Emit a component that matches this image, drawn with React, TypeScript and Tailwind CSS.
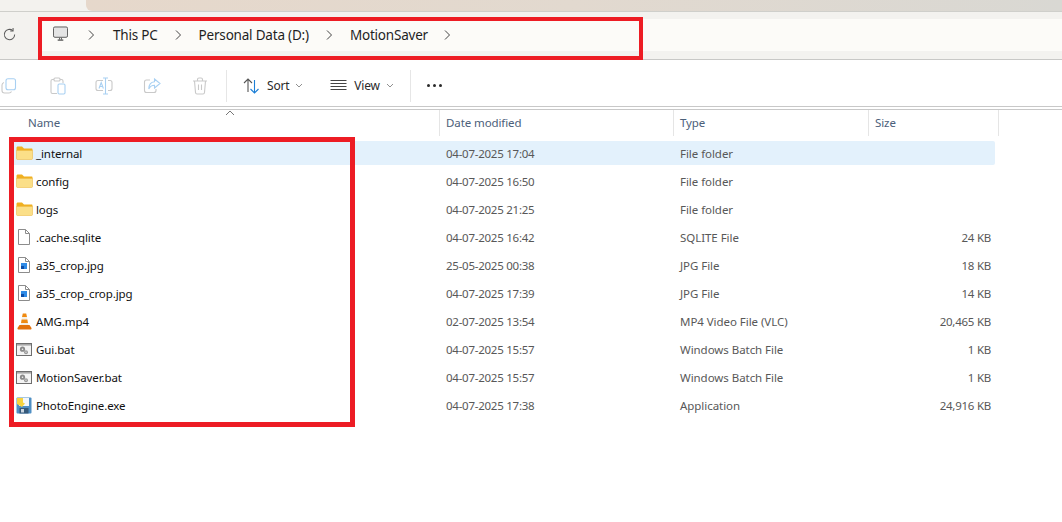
import React from "react";

const font = "font-['Noto_Sans','Open_Sans',sans-serif]";

function Chevron() {
  return (
    <svg width="8" height="12" viewBox="0 0 8 12" fill="none" stroke="#444" strokeWidth="1">
      <path d="M2 1.5 6.5 6 2 10.5" />
    </svg>
  );
}

function Folder() {
  return (
    <svg width="17" height="14" viewBox="0 0 17 14">
      <path d="M0.5 2C0.5 1 1 .5 2 .5H6L8 2.5H15.5C16.3 2.5 16.5 3 16.5 3.5V5H.5Z" fill="#f0b020" />
      <path d="M.5 4.5H16.5V12.5C16.5 13.2 16 13.5 15.5 13.5H1.5C1 13.5.5 13.2.5 12.5Z" fill="#fbdf88" stroke="#eebc4a" strokeWidth=".6" />
    </svg>
  );
}

function Page({ blue }: { blue?: boolean }) {
  return (
    <svg width="13" height="16" viewBox="0 0 13 16" fill="none" className="ml-[1px]">
      <path d="M1.5.5H8.5L12.5 4.5V15.5H1.5Z" fill="#fff" stroke="#8c8c8c" />
      <path d="M8.5.5V4.5H12.5" stroke="#8c8c8c" />
      {blue && <rect x="4" y="6" width="6" height="6" fill="#2f8be6" />}
      {blue && <rect x="4" y="9" width="3" height="3" fill="#0b4ea8" />}
    </svg>
  );
}

function Cone() {
  return (
    <svg width="15" height="17" viewBox="0 0 15 17" className="ml-[1px]">
      <path d="M5.8 .5H9.2L10 4H5Z" fill="#f08a10" />
      <path d="M5 4H10L10.4 6.5H4.6Z" fill="#f5f0e6" />
      <path d="M4.6 6.5H10.4L11 10H4Z" fill="#ee8a12" />
      <path d="M4 10H11L11.5 12H3.5Z" fill="#f4ece0" />
      <path d="M2.5 12H12.5L14.5 15C14.7 16 14 16.5 13.5 16.5H1.5C1 16.5.3 16 .5 15Z" fill="#e2710a" />
    </svg>
  );
}

function Bat() {
  return (
    <svg width="16" height="13" viewBox="0 0 16 13">
      <rect x=".5" y=".5" width="15" height="12" fill="#f4f4f4" stroke="#6e6e6e" />
      <rect x="1" y="1" width="14" height="1.6" fill="#a8a8a8" />
      <circle cx="6.5" cy="6.2" r="2.6" fill="#8a8a8a" />
      <circle cx="10" cy="9.2" r="2" fill="#9a9a9a" />
      <circle cx="6.5" cy="6.2" r=".8" fill="#f4f4f4" />
      <circle cx="10" cy="9.2" r=".6" fill="#f4f4f4" />
    </svg>
  );
}

function Exe() {
  return (
    <svg width="16" height="17" viewBox="0 0 16 17">
      <rect x=".5" y=".5" width="15" height="16" rx="1" fill="#4f8fc4" />
      <rect x="3" y="1" width="10" height="8" fill="#f3f6fa" />
      <path d="M1 1H7V5.5L9 6.5 6 10 1 7Z" fill="#f7d33f" />
      <rect x="3.5" y="11" width="9" height="5.5" fill="#36597a" />
      <rect x="5" y="12" width="3" height="3.5" fill="#c8d4e0" />
    </svg>
  );
}

const rows: [React.ReactNode, string, string, string, string][] = [
  [<Folder />, "_internal", "04-07-2025 17:04", "File folder", ""],
  [<Folder />, "config", "04-07-2025 16:50", "File folder", ""],
  [<Folder />, "logs", "04-07-2025 21:25", "File folder", ""],
  [<Page />, ".cache.sqlite", "04-07-2025 16:42", "SQLITE File", "24 KB"],
  [<Page blue />, "a35_crop.jpg", "25-05-2025 00:38", "JPG File", "18 KB"],
  [<Page blue />, "a35_crop_crop.jpg", "04-07-2025 17:39", "JPG File", "14 KB"],
  [<Cone />, "AMG.mp4", "02-07-2025 13:54", "MP4 Video File (VLC)", "20,465 KB"],
  [<Bat />, "Gui.bat", "04-07-2025 15:57", "Windows Batch File", "1 KB"],
  [<Bat />, "MotionSaver.bat", "04-07-2025 15:57", "Windows Batch File", "1 KB"],
  [<Exe />, "PhotoEngine.exe", "04-07-2025 17:38", "Application", "24,916 KB"],
];

function Crumb({ label }: { label: string }) {
  return <span className="text-[13.5px] text-[#1f1f1f] tracking-[-0.2px]">{label}</span>;
}

export default function App() {
  return (
    <div className={`relative w-[1062px] h-[522px] overflow-hidden bg-white ${font}`}>
      {/* title band */}
      <div className="h-[11px] bg-[#f3f2ee] pl-[86px] border-b border-[#cfcfcb] box-content">
        <div className="h-[11px] rounded-bl-[6px] bg-gradient-to-r from-[#e6d8cb] via-[#e2d9cf] to-[#d9d8d3]" />
      </div>

      {/* address row */}
      <div className="h-[48px] bg-[#f3f2ef] border-b border-[#c8c8c6] pt-[7px] flex">
        <div className="w-[38px] flex items-start pt-[8px] pl-[2px]">
          <svg width="15" height="15" viewBox="0 0 16 16" fill="none" stroke="#5a5a5a" strokeWidth="1.1">
            <path d="M13.5 8A5.5 5.5 0 1 1 11.5 3.8" />
            <path d="M11.8 1V4.2H8.8" />
          </svg>
        </div>
        <div className="flex-1 h-[32px] bg-[#fcfbf8] flex items-center pl-[15px]">
          <svg width="15" height="16" viewBox="0 0 16 16" fill="none" className="mb-[2px]">
            <rect x=".5" y=".5" width="15" height="11" rx="1.5" fill="#e4e4e4" stroke="#555" />
            <path d="M5 14.5H11" stroke="#555" strokeWidth="1.4" />
            <path d="M7 12V14M9 12V14" stroke="#555" />
          </svg>
          <span className="ml-[19px] mr-[18px]"><Chevron /></span>
          <Crumb label="This PC" />
          <span className="ml-[16px] mr-[17px]"><Chevron /></span>
          <Crumb label="Personal Data (D:)" />
          <span className="ml-[16px] mr-[17px]"><Chevron /></span>
          <Crumb label="MotionSaver" />
          <span className="ml-[15px]"><Chevron /></span>
        </div>
      </div>

      {/* command bar */}
      <div className="h-[46px] bg-white flex items-center pt-[5px] text-[12px] tracking-[-0.2px] text-[#2a2a2a]">
        <div className="flex items-center gap-[28px] pl-[1px]">
          <svg width="16" height="16" viewBox="0 0 16 16" fill="none">
            <rect x="5" y=".7" width="9.5" height="11" rx="2" stroke="#a8d0f2" strokeWidth="1.1" />
            <path d="M3 4.5C1.6 5 1 5.7 1 7V12.5C1 14 2 15 3.5 15H8C9.3 15 10 14.5 10.5 13.5" stroke="#c9c9c9" strokeWidth="1.1" />
          </svg>
          <svg width="18" height="18" viewBox="0 0 18 18" fill="none" className="ml-[4px]">
            <path d="M5 2.5H3.5C2.5 2.5 2 3 2 4V15C2 16 2.5 16.5 3.5 16.5H8" stroke="#c9c9c9" strokeWidth="1.1" />
            <path d="M11 2.5H12.5C13.5 2.5 14 3 14 4V6" stroke="#c9c9c9" strokeWidth="1.1" />
            <rect x="5" y="1" width="6" height="3" rx="1" stroke="#c9c9c9" strokeWidth="1.1" />
            <rect x="9" y="7" width="7" height="10" rx="1.2" stroke="#a8d0f2" strokeWidth="1.1" />
          </svg>
          <svg width="18" height="18" viewBox="0 0 18 18" fill="none">
            <path d="M8 3.5H3C1.8 3.5 1 4.2 1 5.5V11.5C1 12.8 1.8 13.5 3 13.5H8" stroke="#c9c9c9" strokeWidth="1.1" />
            <path d="M13 3.5H15C16.2 3.5 17 4.2 17 5.5V11.5C17 12.8 16.2 13.5 15 13.5H13" stroke="#c9c9c9" strokeWidth="1.1" />
            <path d="M8 1H13M10.5 1V17M8 17H13" stroke="#a8d0f2" strokeWidth="1.1" />
            <path d="M4 11.5 6.2 5.5 8.4 11.5M4.8 9.5H7.6" stroke="#a8d0f2" strokeWidth="1.1" />
          </svg>
          <svg width="18" height="18" viewBox="0 0 18 18" fill="none" className="ml-[2px]">
            <path d="M7 3H3.5C2 3 1.5 4 1.5 5V13.5C1.5 15 2.5 15.5 3.5 15.5H11C12.5 15.5 13 14.5 13 13.5V12" stroke="#c9c9c9" strokeWidth="1.1" />
            <path d="M11.5 2 17 6.5 11.5 11V8.3C8.5 8.3 7 9.5 5.8 12 5.8 7.5 8 5 11.5 4.7Z" stroke="#a8d0f2" strokeWidth="1.1" />
          </svg>
          <svg width="16" height="18" viewBox="0 0 16 18" fill="none" className="ml-[3px]">
            <path d="M1 4H15M5.5 4V2.5C5.5 1.5 6 1 7 1H9C10 1 10.5 1.5 10.5 2.5V4" stroke="#c9c9c9" strokeWidth="1.1" />
            <path d="M2.5 4 3.5 15.5C3.6 16.5 4.2 17 5 17H11C11.8 17 12.4 16.5 12.5 15.5L13.5 4" stroke="#c9c9c9" strokeWidth="1.1" />
            <path d="M6.5 7.5V13M9.5 7.5V13" stroke="#c9c9c9" strokeWidth="1.1" />
          </svg>
        </div>
        <div className="w-px h-[32px] bg-[#e6e6e6] ml-[18px]" />
        <div className="flex items-center ml-[16px]">
          <svg width="17" height="16" viewBox="0 0 17 16" fill="none">
            <path d="M1 5 5 1 9 5M5 1V14" stroke="#555" strokeWidth="1.1" />
            <path d="M7.5 11 11.5 15 15.5 11M11.5 15V2" stroke="#1c7fd6" strokeWidth="1.1" />
          </svg>
          <span className="ml-[7px]">Sort</span>
          <svg width="8" height="5" viewBox="0 0 8 5" fill="none" stroke="#909090" className="ml-[6px]"><path d="M1 1 4 4 7 1" /></svg>
        </div>
        <div className="flex items-center ml-[27px]">
          <svg width="17" height="13" viewBox="0 0 17 13" fill="none" stroke="#444">
            <path d="M.5 1.5H16.5M.5 4.5H16.5M.5 7.5H16.5M.5 10.5H16.5" />
          </svg>
          <span className="ml-[7px]">View</span>
          <svg width="8" height="5" viewBox="0 0 8 5" fill="none" stroke="#909090" className="ml-[6px]"><path d="M1 1 4 4 7 1" /></svg>
        </div>
        <div className="w-px h-[32px] bg-[#e6e6e6] ml-[16px]" />
        <div className="flex items-center gap-[3px] ml-[16px]">
          <span className="w-[3px] h-[3px] rounded-full bg-[#2a2a2a]" />
          <span className="w-[3px] h-[3px] rounded-full bg-[#2a2a2a]" />
          <span className="w-[3px] h-[3px] rounded-full bg-[#2a2a2a]" />
        </div>
      </div>

      {/* column header */}
      <div className="h-[4px] border-t border-b border-[#c8c8c8]" />
      <div className="grid grid-cols-[440px_234px_195px_130px] h-[26px] text-[11.5px] tracking-[-0.1px] text-[#4c607a] relative">
        <div className="pl-[28px] pt-[4px] border-r border-[#e5e5e5]">Name</div>
        <div className="pl-[6px] pt-[4px] border-r border-[#e5e5e5]">Date modified</div>
        <div className="pl-[6px] pt-[4px] border-r border-[#e5e5e5]">Type</div>
        <div className="pl-[6px] pt-[4px] border-r border-[#e5e5e5]">Size</div>
        <svg width="10" height="6" viewBox="0 0 10 6" fill="none" stroke="#777" className="absolute left-[225px] top-0"><path d="M1 5 5 1 9 5" /></svg>
      </div>

      {/* rows */}
      <div className="pt-[5px] pl-[9px] w-[995px] flex flex-col gap-[4px] text-[11.5px]">
        {rows.map(([icon, name, date, type, size], i) => (
          <div
            key={name}
            className={`h-[24px] grid grid-cols-[431px_234px_195px_126px] items-center rounded-r-[2px] ${i === 0 ? "bg-[#e3f1fc]" : ""}`}
          >
            <div className="flex items-center pl-[7px] text-[#101010] tracking-[-0.1px]">
              <span className="w-[20px] flex items-center">{icon}</span>
              <span className="pt-[1px]">{name}</span>
            </div>
            <div className="pl-[6px] pt-[1px] text-[#585858] tracking-[-0.25px]">{date}</div>
            <div className="pl-[6px] pt-[1px] text-[#585858] tracking-[-0.05px]">{type}</div>
            <div className="text-right pt-[1px] pr-[4px] text-[#585858] tracking-[-0.25px]">{size}</div>
          </div>
        ))}
      </div>

      {/* annotation boxes */}
      <div className="absolute left-[38px] top-[17px] w-[605px] h-[43px] border-[4px] border-[#ed1c24]" />
      <div className="absolute left-[9px] top-[137px] w-[346px] h-[290px] border-[5px] border-[#ed1c24]" />
    </div>
  );
}
